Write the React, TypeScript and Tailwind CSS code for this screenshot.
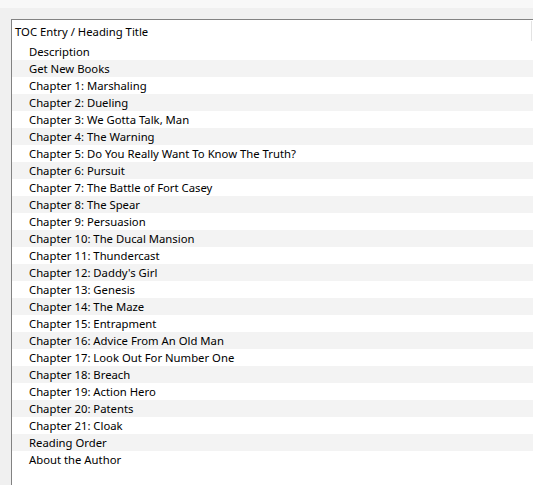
import React from "react";

const items = [
  "Description",
  "Get New Books",
  "Chapter 1: Marshaling",
  "Chapter 2: Dueling",
  "Chapter 3: We Gotta Talk, Man",
  "Chapter 4: The Warning",
  "Chapter 5: Do You Really Want To Know The Truth?",
  "Chapter 6: Pursuit",
  "Chapter 7: The Battle of Fort Casey",
  "Chapter 8: The Spear",
  "Chapter 9: Persuasion",
  "Chapter 10: The Ducal Mansion",
  "Chapter 11: Thundercast",
  "Chapter 12: Daddy's Girl",
  "Chapter 13: Genesis",
  "Chapter 14: The Maze",
  "Chapter 15: Entrapment",
  "Chapter 16: Advice From An Old Man",
  "Chapter 17: Look Out For Number One",
  "Chapter 18: Breach",
  "Chapter 19: Action Hero",
  "Chapter 20: Patents",
  "Chapter 21: Cloak",
  "Reading Order",
  "About the Author",
];

export default function App() {
  return (
    <div
      className="w-[533px] h-[485px] overflow-hidden bg-[#f0f0f0] flex flex-col text-black text-[11.3px]"
      style={{ fontFamily: '"Noto Sans", "Open Sans", sans-serif' }}
    >
      <div className="h-[8px] bg-[#f8f8f8] shrink-0" />
      <div className="h-[11px] shrink-0" />
      <div className="flex-1 ml-[11px] bg-white border-l border-t border-[#828282] flex flex-col">
        <div className="h-[23px] flex items-center pl-[3px] pr-0 relative">
          <span className="leading-none">TOC Entry / Heading Title</span>
          <div className="absolute right-[1px] top-[1px] h-[20px] w-px bg-[#e3e3e3]" />
        </div>
        {items.map((t, i) => (
          <div
            key={t}
            className={`h-[17px] flex items-center pl-[17px] ${i % 2 === 1 ? "bg-[#f3f3f3]" : "bg-white"}`}
          >
            <span className="leading-none">{t}</span>
          </div>
        ))}
      </div>
    </div>
  );
}
